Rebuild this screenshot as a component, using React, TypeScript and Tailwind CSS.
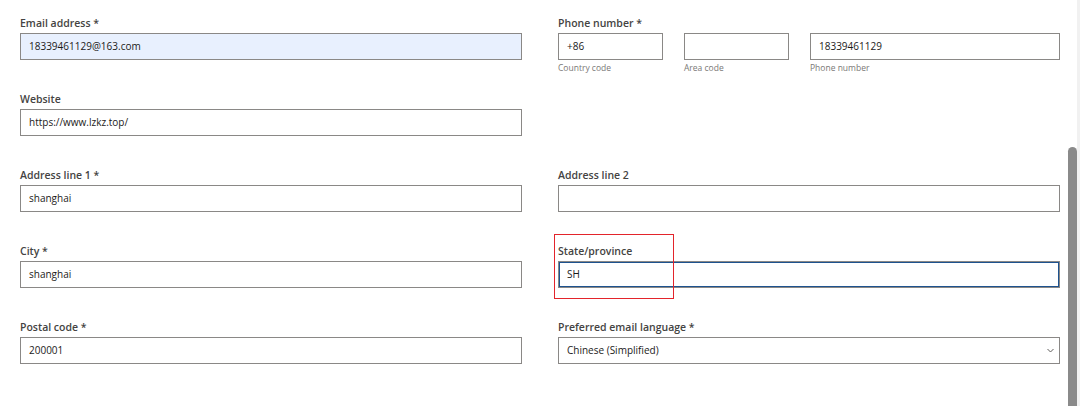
import { ReactNode } from "react"

const font = { fontFamily: '"Open Sans", "Noto Sans", sans-serif' }

function Label({ children }: { children: ReactNode }) {
	return <div className="h-[18px] mb-[2px] text-[10.5px] leading-[20px] font-semibold text-[#444342]">{children}</div>
}

function Input({ value, className = "" }: { value?: string; className?: string }) {
	return (
		<div
			className={`h-[27px] border border-[#8a8886] px-[8px] flex items-center text-[10px] text-[#1b1a19] ${className}`}
		>
			{value}
		</div>
	)
}

function Field({ label, value, className }: { label: string; value?: string; className?: string }) {
	return (
		<div>
			<Label>{label}</Label>
			<Input value={value} className={className} />
		</div>
	)
}

function Row({ children }: { children: ReactNode }) {
	return <div className="h-[76px] grid grid-cols-2 gap-x-[36px]">{children}</div>
}

export default function App() {
	return (
		<div className="w-[1080px] h-[406px] bg-white flex overflow-hidden" style={font}>
			<div className="flex-1 pl-[20px] pr-[8px] pt-[13px]">
				<Row>
					<Field label="Email address *" value="18339461129@163.com" className="bg-[#e8f0fe]" />
					<div>
						<Label>Phone number *</Label>
						<div className="flex gap-[21px]">
							{[
								["+86", "Country code", "w-[105px]"],
								["", "Area code", "w-[105px]"],
								["18339461129", "Phone number", "flex-1"],
							].map(([v, sub, w]) => (
								<div key={sub} className={w}>
									<Input value={v} />
									<div className="mt-[2px] text-[8.5px] leading-[12px] text-[#7a7876]">{sub}</div>
								</div>
							))}
						</div>
					</div>
				</Row>
				<Row>
					<Field label="Website" value="https://www.lzkz.top/" />
					<div />
				</Row>
				<Row>
					<Field label="Address line 1 *" value="shanghai" />
					<Field label="Address line 2" />
				</Row>
				<Row>
					<Field label="City *" value="shanghai" />
					<div className="relative">
						<Label>State/province</Label>
						<Input value="SH" className="border-[#1d528f] shadow-[inset_0_0_0_1px_#1d528f]" />
						<div className="absolute -left-[4px] -top-[7px] w-[120px] h-[65px] border-[1.5px] border-[#e3242b]" />
					</div>
				</Row>
				<Row>
					<Field label="Postal code *" value="200001" />
					<div>
						<Label>Preferred email language *</Label>
						<div className="h-[27px] border border-[#8a8886] pl-[8px] pr-[5px] flex items-center justify-between text-[10px] text-[#1b1a19]">
							<span>Chinese (Simplified)</span>
							<svg width="7" height="5" viewBox="0 0 7 5" fill="none">
								<path d="M0.5 1L3.5 4L6.5 1" stroke="#605e5c" strokeWidth="1" />
							</svg>
						</div>
					</div>
				</Row>
			</div>
			<div className="w-[12px] flex">
				<div className="w-[9px] flex flex-col">
					<div className="h-[147px]" />
					<div className="flex-1 bg-[#8a8a8a] rounded-t-full" />
				</div>
				<div className="flex-1 bg-[#f1f1f1]" />
			</div>
		</div>
	)
}
